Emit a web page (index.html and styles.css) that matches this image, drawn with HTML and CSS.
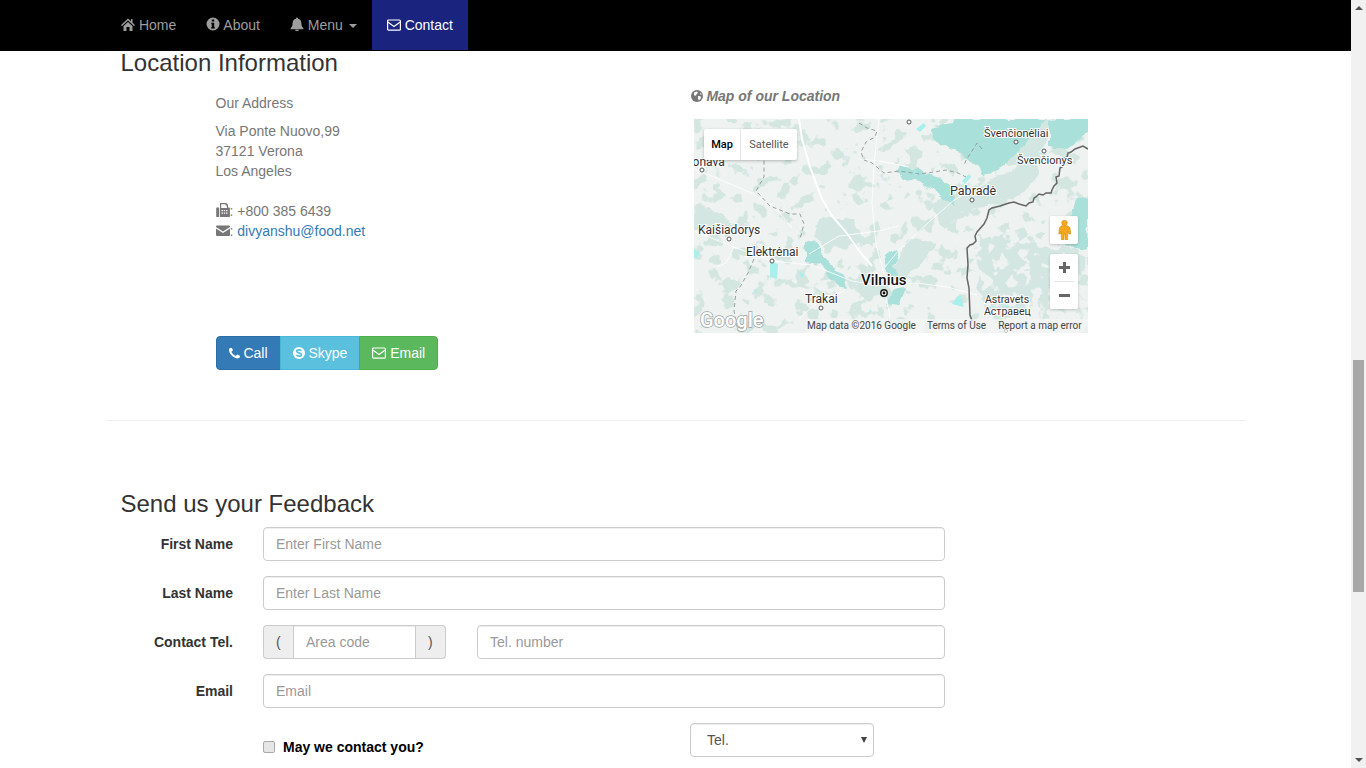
FILE: index.html
```html
<!DOCTYPE html>
<html lang="en">
<head>
<meta charset="utf-8">
<title>Contact</title>
<link rel="stylesheet" href="styles.css">
</head>
<body>
<div class="window">
  <div class="viewport">
    <nav class="navbar">
      <ul class="nav-list">
        <li><a class="nav-link" href="#"><svg class="ic" viewBox="0 0 14 14"><path d="M7 1.500 0 8l1 1 6-5.500L13 9l1-1-2.500-2.300V2H10v2.300z"/><path d="M2.500 9 7 5l4.500 4v5h-3v-4h-3v4h-3z"/></svg> Home</a></li>
        <li><a class="nav-link" href="#"><svg class="ic" viewBox="0 0 14 14"><path fill-rule="evenodd" d="M7 .5a6.500 6.500 0 1 0 0 13 6.500 6.500 0 0 0 0-13zM5.800 2.600h2.400v2H5.800zM5.300 5.800h2.900v4.400h.8v1.400H5v-1.400h.8V7.200h-.5z"/></svg> About</a></li>
        <li><a class="nav-link" href="#"><svg class="ic" viewBox="0 0 14 14"><path d="M7 .5a1 1 0 0 1 1 1v.3c2.200.4 3.400 2 3.400 4.200 0 3 .8 4 2 5.200v1H.6v-1c1.200-1.200 2-2.200 2-5.200 0-2.200 1.200-3.800 3.400-4.200v-.3a1 1 0 0 1 1-1zM5.200 12.800h3.600a1.800 1.400 0 0 1-3.600 0z"/></svg> Menu <span class="caret"></span></a></li>
        <li><a class="nav-link nav-active" href="#"><svg class="ic ic-env" viewBox="0 0 14 14"><rect class="line" x=".6" y="2" width="12.800" height="10.200" rx="1"/><path class="line" d="M.8 4 7 8.600 13.200 4"/></svg> Contact</a></li>
      </ul>
    </nav>

    <main class="container">
      <h2 class="section-title">Location Information</h2>
      <section class="location">
        <div class="address-col">
          <p class="address-head">Our Address</p>
          <address class="address">
            Via Ponte Nuovo,99<br>
            37121 Verona<br>
            Los Angeles<br>
            <br>
            <svg class="ic" viewBox="0 0 14 14"><path d="M.9 4.500h1.700c.4 0 .6.3.6.6v8.300c0 .3-.2.6-.6.6H.9c-.4 0-.7-.3-.7-.6V5.100c0-.3.3-.6.7-.6z"/><path fill-rule="evenodd" d="M4 0h6.200L12 1.800V4.500h1.200c.4 0 .7.300.7.600v8.300c0 .3-.3.600-.7.600H4zM5.200 1.200v3.800h5.700V2.600H9.600V1.200zM5.500 7v1.200h1.400V7zM7.800 7v1.200h1.400V7zM10.100 7v1.200h1.400V7zM5.500 9.600v1.200h1.400V9.600zM7.800 9.600v1.200h1.400V9.600zM10.100 9.600v1.200h1.400V9.600z"/></svg>: +800 385 6439<br>
            <svg class="ic" viewBox="0 0 14 14"><path d="M0 3.500a1 1 0 0 1 1-1h12a1 1 0 0 1 1 1V4L7 8.600 0 4zM0 5.500 7 10l7-4.500V12a1 1 0 0 1-1 1H1a1 1 0 0 1-1-1z"/></svg>: <a class="link" href="#">divyanshu@food.net</a>
          </address>
          <div class="btn-group">
            <a class="btn btn-call" href="#"><svg class="ic-phone" viewBox="200 200 1400 1400"><path d="M1600 1240q0 27-10 70.500t-21 68.500q-21 50-122 106-94 51-186 51-27 0-53-3.500t-57.500-12.500-47-14.500-55.500-20.500-49-18q-98-35-175-83-127-79-264-216t-216-264q-48-77-83-175-3-9-18-49t-20.500-55.500-14.500-47-12.500-57.500-3.500-53q0-92 51-186 56-101 106-122 25-11 68.500-21t70.500-10q14 0 21 3 18 6 53 76 11 19 30 54t35 63.500 31 53.500q3 4 17.500 25t21.500 35.500 7 28.500q0 20-28.500 50t-62 55-62 53-28.500 46q0 9 5 22.500t8.500 20.500 14 24 11.500 19q76 137 174 235t235 174q2 1 19 11.500t24 14 20.500 8.500 22.500 5q18 0 46-28.500t53-62 55-62 50-28.500q14 0 28.500 7t35.500 21.500 25 17.500q25 15 53.500 31t63.500 35 54 30q70 35 76 53 3 7 3 21z"/></svg> Call</a>
            <a class="btn btn-skype" href="#"><svg class="ic-skype" viewBox="0 0 12 14"><circle cx="6" cy="7" r="6" fill="#fff"/><path class="skype-s" d="M8.300 5.100C8 4.200 7 3.800 6 3.800c-1.200 0-2.300.5-2.300 1.500 0 2 4.700 1.200 4.700 3.400 0 1-1.200 1.500-2.400 1.500-1.100 0-2.100-.4-2.400-1.400"/></svg> Skype</a>
            <a class="btn btn-email" href="#"><svg class="ic ic-env" viewBox="0 0 14 14"><rect class="line" x=".6" y="2" width="12.800" height="10.200" rx="1"/><path class="line" d="M.8 4 7 8.600 13.200 4"/></svg> Email</a>
          </div>
        </div>
        <div class="map-col">
          <p class="map-title"><svg class="ic-globe" viewBox="0 0 12 14"><circle cx="6" cy="7" r="6"/><path class="globe-land" d="M3 3.500 6 2.500l1 1.200-1.500 1.500-.5 1.500-2-.5zM7 7l2.500.2.500 1.800-1.800 2.300L7 10zM9.500 3.500l1.300 2-1.500.3z"/></svg> Map of our Location</p>
          <div class="map">
            <svg class="map-art" viewBox="0 0 394 214">
              <defs>
                <filter id="patches" x="0" y="0" width="100%" height="100%" color-interpolation-filters="sRGB">
                  <feTurbulence type="fractalNoise" baseFrequency=".07" numOctaves="3" seed="11"/>
                  <feColorMatrix type="matrix" values="0 0 0 0 .83  0 0 0 0 .90  0 0 0 0 .88  14 0 0 0 -7.900"/>
                </filter>
                <filter id="holes" x="0" y="0" width="100%" height="100%" color-interpolation-filters="sRGB">
                  <feTurbulence type="fractalNoise" baseFrequency=".08" numOctaves="3" seed="4"/>
                  <feColorMatrix type="matrix" values="0 0 0 0 .933  0 0 0 0 .949  0 0 0 0 .945  14 0 0 0 -7.500"/>
                </filter>
                <filter id="rough" x="-5%" y="-5%" width="110%" height="110%">
                  <feTurbulence type="fractalNoise" baseFrequency=".09" numOctaves="2" seed="3"/>
                  <feDisplacementMap in="SourceGraphic" scale="9" xChannelSelector="R" yChannelSelector="G"/>
                </filter>
                <filter id="soft"><feGaussianBlur stdDeviation=".35"/></filter>
              </defs>
              <rect class="m-base" width="394" height="214"/>
              <g filter="url(#soft)">
                <rect width="394" height="214" filter="url(#patches)"/>
                <path class="m-light" filter="url(#rough)" d="M280 122l50-12 15 20 49-2v38l-44 4-20 25-30 5-15-30zM245 80l55-20 40-20 5 15-15 20-30 10-35 10-15 15-10-18zM300 25l15-10 25-15 15 0-3 22-12 20-25 5zM212 122l10-4 20 8-14 18-12 10-12 12-6-14 10-12zM125 100l35 0 10 20-20 10-15-5-15-7zM0 90l15-2 25 17-10 13-20-6-10-2zM165 155l25 4 8 16-25 5-12-12z"/>
                <rect x="262" y="100" width="132" height="114" filter="url(#holes)"/>
                <path class="m-teal" filter="url(#rough)" d="M236 10l23-4 3-6h87l-8 12-13 17-17 17-22 12-6-10-16-14-14-4-10-7zM355 0h39v15l-22 15-17-2zM206 47l19 3 7 5 13 3 10 7 7 15v8l-12-8-10-8-15-10-17-4-5-6zM383 78l11 2v50l-29-5 10-20zM112 125l10-3 6 13 14 13 8 12 2 8-12-3-15-20-13-2zM195 130l10 5-5 15 6 6-11 5-5-15zM200 170l12-2-7 17-10-2z"/>
                <path class="m-water" d="M76 142l8 3-1 15-7-2zM258 185l8-10 4 13zM222 10l8-6 2 3-6 6zM0 130l6 4-4 6-2-2zM105 153l5 2-2 5zM268 62l7-7 2 3-6 7zM220 50l4 5-3 2zM115 178l4 2-3 3zM60 170l3 2-2 2zM175 190l3 2-2 2zM310 185l4 2-2 3z"/>
                <path class="m-road-big" d="M105 0l3 20 8 28 12 32 10 17 14 16 14 20 12 14"/>
                <path class="m-road" d="M0 50l20 8 35 15 25 14 18 22M0 112l40 16 38 14 40 4 40 16 25 4 40-2 30 4 30 8M185 0l-5 45-2 40 4 40 8 30M290 65l-30 16-25 22-30 28-18 22M165 40l20 2 30 6M115 135l30-18 40-5 20-5M40 128l-8 16-10 4M190 170l5 22 3 22M150 172l-30 14-15 14"/>
                <path class="m-dash" d="M165 4l8 5 10 3-2 6-9 5-5 10 3 8 8 3 12 10 15-2 20 3 15-2 12-2 12 3 8 4M62 30l8 12 0 16-8 14 14 15 20 8 10 0 4 10-4 15M60 140l-6 14-8 14-4 4-2 20 4 20M288 30l-5-6-3 5-8 12-2 6"/>
                <path class="m-border" d="M394 30l-5-3-8 3-4 3-3 1-1 4-3 1-1 6-1 3-2 1-1 8-3 1 1 6-3 3-2 4-1 3h-5l-3 2-4-1-3 3-2 1-1 4-4 1-3 3-7-2-5-2-5 1-9 3-8 2-3 2-2 8-3 6-7 8-2 4 1 5-3 3-3 1-3 3 1 17-1 13 2 10 1 27 2 6"/>
              </g>
              <g class="m-dots">
                <circle cx="8" cy="51" r="2"/><circle cx="322" cy="23" r="2"/><circle cx="350" cy="32" r="2"/><circle cx="278" cy="81" r="2"/><circle cx="215" cy="3" r="2"/><circle cx="35" cy="120" r="2"/><circle cx="78" cy="142" r="2"/><circle cx="127" cy="189" r="2"/><circle cx="312" cy="212" r="1.600"/>
              </g>
              <circle class="m-city" cx="190" cy="174" r="3.200"/>
              <circle class="m-city-dot" cx="190" cy="174" r="1.400"/>
              <text class="m-label" x="-8" y="47">Jonava</text>
              <text class="m-label m-label-xs" x="290" y="18">Švenčionėliai</text>
              <text class="m-label m-label-xs" x="323" y="45">Švenčionys</text>
              <text class="m-label m-label-lg" x="256" y="76">Pabradė</text>
              <text class="m-label" x="4" y="115">Kaišiadorys</text>
              <text class="m-label" x="52" y="137">Elektrėnai</text>
              <text class="m-label" x="111" y="184">Trakai</text>
              <text class="m-label m-label-city" x="167" y="166">Vilnius</text>
              <text class="m-label m-label-sm" x="291" y="184">Astravets</text>
              <text class="m-label m-label-sm" x="290" y="196">Астравец</text>
              <text class="m-google" x="6" y="208">Google</text>
            </svg>
            <div class="map-type">
              <span class="map-type-item map-type-on">Map</span>
              <span class="map-type-item map-type-sat">Satellite</span>
            </div>
            <div class="pegman">
              <svg class="pegman-art" viewBox="0 0 13 20"><circle cx="6.500" cy="3" r="2.800"/><path d="M3.500 5.800h6l2.500 1.800.8 6.400h-1.800L10 11.500 9.500 20H7.200l-.4-6h-.6l-.4 6H3.500L3 11.500 2.500 14H.7l.8-6.400z"/></svg>
            </div>
            <div class="zoom-ctl">
              <span class="zoom-btn"><svg class="zoom-art" viewBox="0 0 11 11"><path d="M4 0h3v4h4v3H7v4H4V7H0V4h4z"/></svg></span>
              <span class="zoom-sep"></span>
              <span class="zoom-btn"><svg class="zoom-art" viewBox="0 0 11 11"><path d="M0 4h11v3H0z"/></svg></span>
            </div>
            <div class="attrib">
              <span class="attrib-data">Map data ©2016 Google</span>
              <span class="attrib-terms">Terms of Use</span>
              <span class="attrib-error">Report a map error</span>
            </div>
          </div>
        </div>
      </section>

      <hr class="rule">

      <h2 class="section-title">Send us your Feedback</h2>
      <form class="form">
        <div class="form-row">
          <label class="form-label" for="first">First Name</label>
          <input class="control" id="first" type="text" placeholder="Enter First Name">
        </div>
        <div class="form-row">
          <label class="form-label" for="last">Last Name</label>
          <input class="control" id="last" type="text" placeholder="Enter Last Name">
        </div>
        <div class="form-row">
          <label class="form-label" for="area">Contact Tel.</label>
          <div class="tel-fields">
            <div class="input-group">
              <span class="addon addon-left">(</span>
              <input class="control control-mid" id="area" type="text" placeholder="Area code">
              <span class="addon addon-right">)</span>
            </div>
            <input class="control" type="text" placeholder="Tel. number" aria-label="Tel. number">
          </div>
        </div>
        <div class="form-row">
          <label class="form-label" for="email">Email</label>
          <input class="control" id="email" type="email" placeholder="Email">
        </div>
        <div class="form-row">
          <span></span>
          <div class="contact-pref">
            <label class="check-label"><input class="check" type="checkbox"> May we contact you?</label>
            <div class="select-wrap">
              <select class="control select" aria-label="Contact by">
                <option>Tel.</option>
                <option>Email</option>
              </select>
            </div>
          </div>
        </div>
      </form>
    </main>
  </div>
  <div class="scrollbar">
    <span class="arrow arrow-up"></span>
    <span class="thumb"></span>
    <span class="arrow arrow-down"></span>
  </div>
</div>
</body>
</html>
```

FILE: styles.css
```css
* { box-sizing: border-box; }

html, body {
  margin: 0;
  height: 768px;
  overflow: hidden;
}

body {
  font-family: "Liberation Sans", Arial, sans-serif;
  font-size: 14px;
  line-height: 20px;
  color: #333;
  background: #fff;
}

.window { display: flex; height: 768px; }
.viewport { flex: 1; min-width: 0; overflow: hidden; }

/* scrollbar */
.scrollbar {
  width: 15px;
  flex: none;
  background: #f1f1f1;
  display: flex;
  flex-direction: column;
  align-items: center;
}
.arrow { width: 0; height: 0; border-left: 4px solid transparent; border-right: 4px solid transparent; }
.arrow-up { border-bottom: 4px solid #505050; margin-top: 6px; }
.arrow-down { border-top: 4px solid #505050; margin-top: auto; margin-bottom: 6px; }
.thumb { width: 11px; height: 232px; background: #a8a8a8; margin-top: 350px; }

/* navbar */
.navbar { height: 51px; background: #000; border-bottom: 1px solid #000; }
.nav-list {
  list-style: none;
  margin: 0 0 0 91px;
  padding: 0 15px;
  width: 1170px;
  display: flex;
}
.nav-link {
  display: block;
  padding: 15px;
  height: 50px;
  color: #9d9d9d;
  text-decoration: none;
}
.nav-active { background: #1a237e; color: #fff; }
.caret {
  display: inline-block;
  width: 0;
  height: 0;
  margin-left: 2px;
  vertical-align: middle;
  border-top: 4px solid #9d9d9d;
  border-left: 4px solid transparent;
  border-right: 4px solid transparent;
}

/* icons */
.ic { width: 14px; height: 14px; fill: currentColor; vertical-align: -1px; }
.ic-env { vertical-align: -2px; }
.line { fill: none; stroke: currentColor; stroke-width: 1.2; }
.ic-phone { width: 11px; height: 11px; fill: currentColor; vertical-align: -1px; }
.ic-skype { width: 12px; height: 14px; vertical-align: -2px; }
.skype-s { fill: none; stroke: #5bc0de; stroke-width: 1.7; }
.ic-globe { width: 12px; height: 14px; fill: #777; vertical-align: -2px; }
.globe-land { fill: #fff; }

/* content */
.container { width: 1110px; margin: -1px 0 0 120.500px; }
.section-title { margin: 0; font-size: 24px; font-weight: 400; line-height: 26px; color: #333; }

.location { display: grid; grid-template-columns: 570px 1fr; }
.address-col { padding: 17px 0 0 95px; color: #777; }
.address-head { margin: 0 0 8px; }
.address { font-style: normal; margin: 0; }
.link { color: #337ab7; text-decoration: none; }

.btn-group { display: flex; margin-top: 95px; }
.btn {
  display: block;
  height: 34px;
  padding: 6px 12px;
  border: 1px solid;
  color: #fff;
  text-decoration: none;
  white-space: nowrap;
}
.btn + .btn { margin-left: -1px; }
.btn-call { background: #337ab7; border-color: #2e6da4; border-radius: 4px 0 0 4px; }
.btn-skype { background: #5bc0de; border-color: #46b8da; }
.btn-email { background: #5cb85c; border-color: #4cae4c; border-radius: 0 4px 4px 0; }

.map-col { padding-top: 10px; }
.map-title { margin: 0 0 13px; color: #777; font-weight: 700; font-style: italic; }
.map { position: relative; width: 394px; height: 214px; margin-left: 3.500px; overflow: hidden; }
.map-art { display: block; width: 394px; height: 214px; }

.m-base { fill: #eef2f1; }
.m-light { fill: #d3e6e1; }
.m-teal { fill: #a9e0d9; }
.m-water { fill: #a8f0ec; }
.m-road-big { fill: none; stroke: #fff; stroke-width: 2; }
.m-road { fill: none; stroke: #fff; stroke-width: .8; }
.m-dash { fill: none; stroke: #9a9e9e; stroke-width: 1; stroke-dasharray: 4 3; }
.m-border { fill: none; stroke: #666; stroke-width: 1.500; }
.m-dots circle { fill: #fff; stroke: #555; stroke-width: 1; }
.m-city { fill: #fff; stroke: #111; stroke-width: 1.400; }
.m-city-dot { fill: #111; }
.m-label {
  font-family: Roboto, "Liberation Sans", sans-serif;
  font-size: 12px;
  fill: #333;
  stroke: #fff;
  stroke-width: 2px;
  paint-order: stroke;
}
.m-label-lg { font-size: 12.500px; }
.m-label-xs { font-size: 11px; }
.m-label-sm { font-size: 10.500px; }
.m-label-city { font-size: 15px; font-weight: 500; fill: #111; }
.m-google {
  font-family: Roboto, "Liberation Sans", sans-serif;
  font-size: 20px;
  font-weight: 500;
  fill: #fff;
  stroke: #9aa5a3;
  stroke-width: 1.500px;
  paint-order: stroke;
}

.map-type {
  position: absolute;
  left: 10px;
  top: 10px;
  height: 31px;
  display: flex;
  background: #fff;
  border-radius: 2px;
  box-shadow: 0 1px 3px rgba(0, 0, 0, .25);
  font-family: Roboto, "Liberation Sans", sans-serif;
  font-size: 11px;
  line-height: 31px;
  color: #565656;
}
.map-type-item { text-align: center; }
.map-type-on { width: 37px; color: #000; font-weight: 500; border-right: 1px solid #e6e6e6; }
.map-type-sat { width: 56px; }

.pegman {
  position: absolute;
  left: 356px;
  top: 97px;
  width: 28px;
  height: 28px;
  background: #fff;
  border-radius: 2px;
  box-shadow: 0 1px 3px rgba(0, 0, 0, .2);
  display: flex;
  align-items: center;
  justify-content: center;
}
.pegman-art { width: 13px; height: 20px; fill: #f5a81c; stroke: #c98a10; stroke-width: .5; }

.zoom-ctl {
  position: absolute;
  left: 356px;
  top: 135px;
  width: 28px;
  height: 55px;
  background: #fff;
  border-radius: 2px;
  box-shadow: 0 1px 3px rgba(0, 0, 0, .2);
  display: flex;
  flex-direction: column;
  align-items: center;
}
.zoom-btn { flex: 1; display: flex; align-items: center; }
.zoom-sep { width: 20px; height: 1px; background: #e6e6e6; }
.zoom-art { width: 11px; height: 11px; fill: #666; }

.attrib {
  position: absolute;
  right: 0;
  bottom: 0;
  left: 112px;
  height: 14px;
  padding-left: 1px;
  display: flex;
  background: rgba(245, 245, 245, .7);
  font-family: Roboto, "Liberation Sans", sans-serif;
  font-size: 10px;
  line-height: 14px;
  color: #444;
  white-space: nowrap;
}
.attrib-terms { margin-left: 11px; }
.attrib-error { margin-left: 12px; }

.rule {
  margin: 50px -15px 70px -14px;
  border: 0;
  border-top: 1px solid #eee;
}

/* form */
.form { margin: 10px 0 0 .5px; }
.form-row {
  display: grid;
  grid-template-columns: 112px 682px;
  column-gap: 30px;
  margin-bottom: 15px;
}
.form-label { font-weight: 700; text-align: right; padding-top: 7px; }
.control {
  display: block;
  width: 100%;
  height: 34px;
  padding: 6px 12px;
  font-family: inherit;
  font-size: 14px;
  line-height: 20px;
  color: #555;
  background: #fff;
  border: 1px solid #ccc;
  border-radius: 4px;
  box-shadow: inset 0 1px 1px rgba(0, 0, 0, .075);
}
.control::placeholder { color: #999; opacity: 1; }

.tel-fields { display: grid; grid-template-columns: 183px 1fr; column-gap: 31px; }
.input-group { display: flex; }
.addon {
  flex: none;
  width: 30px;
  height: 34px;
  padding: 6px 12px;
  background: #eee;
  border: 1px solid #ccc;
  color: #555;
}
.addon-left { border-right: 0; border-radius: 4px 0 0 4px; }
.addon-right { border-left: 0; border-radius: 0 4px 4px 0; }
.control-mid { flex: 1; min-width: 0; border-radius: 0; }

.contact-pref { display: grid; grid-template-columns: 427px 184px; }
.check-label { display: flex; align-items: center; gap: 8px; height: 20px; margin-top: 14px; font-weight: 700; color: #000; }
.check {
  appearance: none;
  width: 12px;
  height: 12px;
  margin: 0;
  background: #e6e6e6;
  border: 1px solid #a9a9a9;
  border-radius: 2px;
}

.select-wrap { position: relative; }
.select { appearance: none; padding-left: 16px; }
.select-wrap::after {
  content: "";
  position: absolute;
  left: 171px;
  top: 14px;
  width: 0;
  height: 0;
  border-top: 6px solid #444;
  border-left: 3px solid transparent;
  border-right: 3px solid transparent;
  pointer-events: none;
}
```
